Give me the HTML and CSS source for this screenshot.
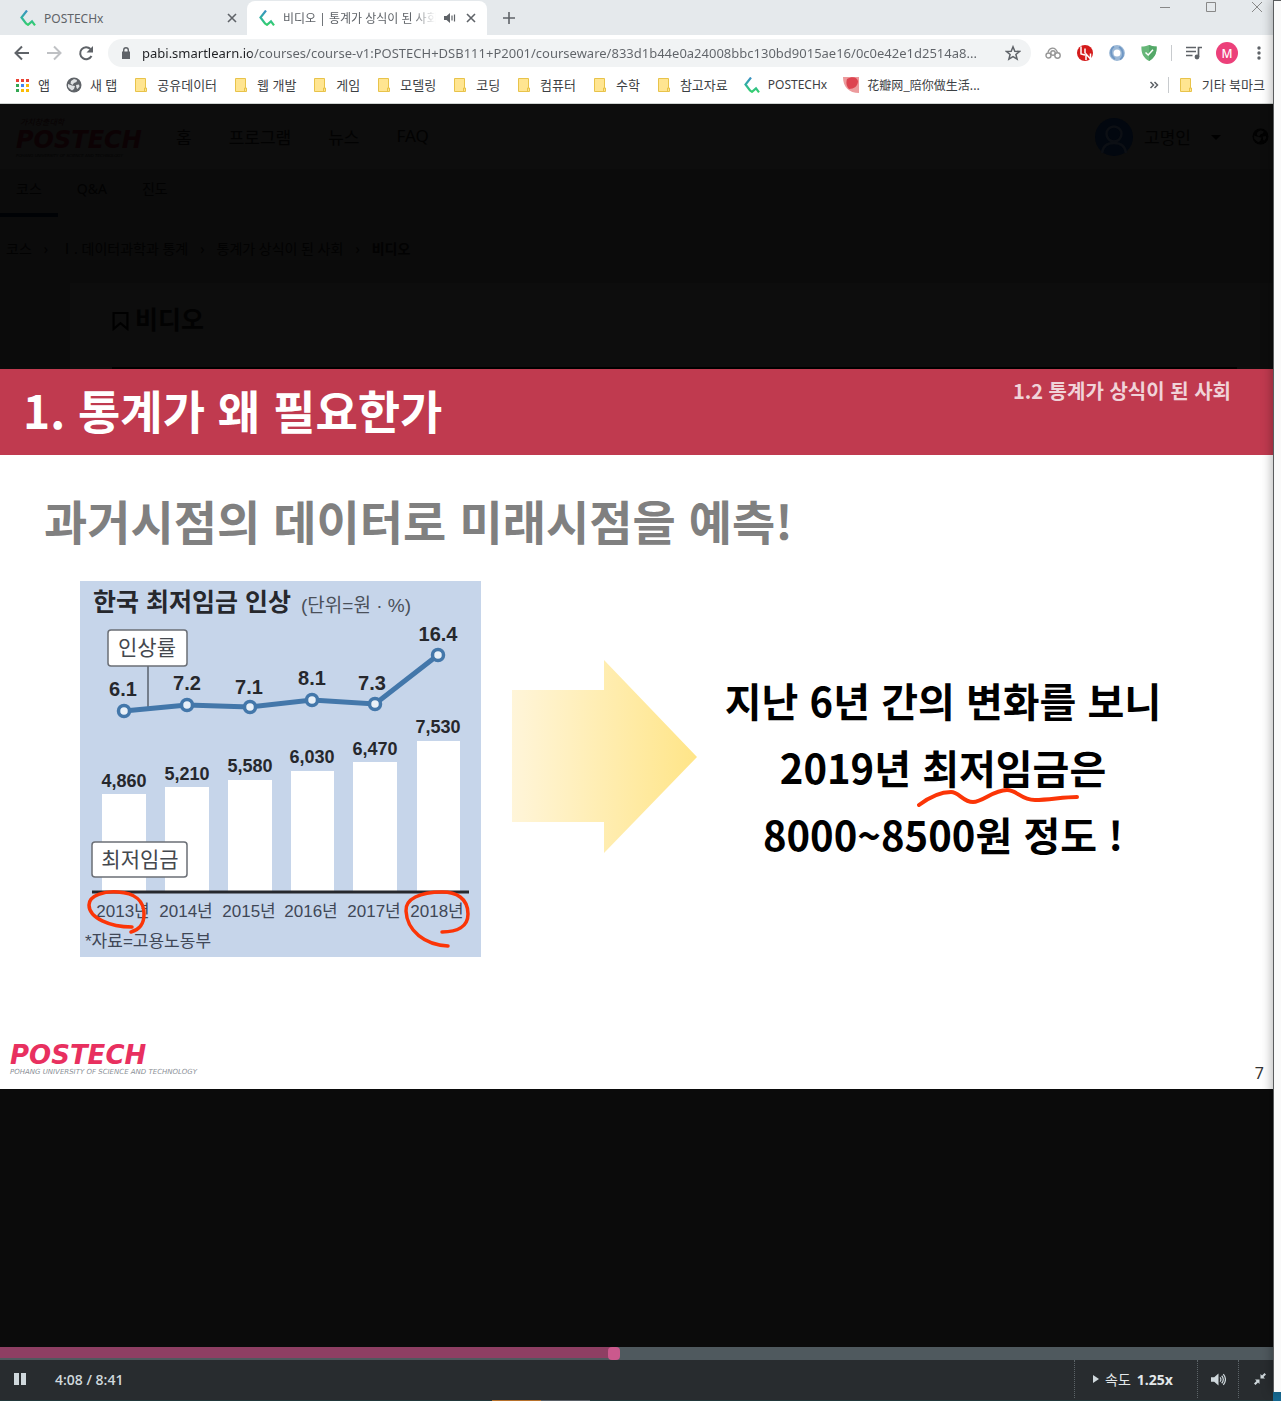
FILE: index.html
```html
<!DOCTYPE html>
<html lang="ko">
<head>
<meta charset="utf-8">
<meta name="viewport" content="width=device-width, initial-scale=1">
<title>비디오 | 통계가 상식이 된 사회</title>
<link rel="stylesheet" href="styles.css">
</head>
<body>
<svg class="defs" width="0" height="0" aria-hidden="true">
  <defs>
    <linearGradient id="brand" x1="0" y1="0" x2="0" y2="1"><stop offset="0" stop-color="#3b8fc4"/><stop offset=".5" stop-color="#2fb3a0"/><stop offset="1" stop-color="#35d06a"/></linearGradient>
    <symbol id="px" viewBox="0 0 16 16"><path d="M7 .5 1.500 7.500 6 13.500 8 14.800 12 11.300 15 15.300" fill="none" stroke="url(#brand)" stroke-width="2.200"/></symbol>
    <symbol id="close" viewBox="0 0 10 10"><path d="M1 1 9 9M9 1 1 9" stroke="#5f6368" stroke-width="1.600"/></symbol>
    <symbol id="folder" viewBox="0 0 16 16"><path d="M2.500 1.500h10v9.500h1v3.500h-11z" fill="#ffe591" stroke="#e8c34a"/><path d="M11.500 14v-3h1.500" fill="none" stroke="#e8c34a"/></symbol>
    <symbol id="globe" viewBox="0 0 16 16"><circle cx="8" cy="8" r="7.500" fill="currentColor"/><path class="land" d="M2 7 6 8.500 9 9 8 12 6 13.500 4 12 2 10zM8 2 11 3 10.500 5 8 6 6.500 8 4.500 6.500 5 4zM10 8 13 7.500 13.500 9.500 11.500 12 10.500 11z"/></symbol>
  </defs>
</svg>

<div class="window">
  <header class="chrome">
    <div class="tabstrip">
      <div class="tab">
        <svg class="ico16"><use href="#px"/></svg>
        <span class="tab-title">POSTECHx</span>
        <button class="plain" aria-label="닫기"><svg class="ico10"><use href="#close"/></svg></button>
      </div>
      <div class="tab active">
        <svg class="ico16"><use href="#px"/></svg>
        <span class="tab-title fade">비디오 | 통계가 상식이 된 사회</span>
        <svg class="ico12" viewBox="0 0 12 12"><path d="M0 4h2.500L6 1v10L2.500 8H0z" fill="#5f6368"/><path d="M8 3.500v5M10.500 2.500v7" stroke="#5f6368" stroke-width="1.200"/></svg>
        <button class="plain" aria-label="닫기"><svg class="ico10"><use href="#close"/></svg></button>
      </div>
      <button class="plain newtab" aria-label="새 탭"><svg class="ico12" viewBox="0 0 12 12"><path d="M6 0v12M0 6h12" stroke="#5f6368" stroke-width="1.600"/></svg></button>
      <div class="winbtns">
        <button class="plain" aria-label="최소화"><svg class="ico10" viewBox="0 0 10 10"><path d="M0 5.500h10" stroke="#888"/></svg></button>
        <button class="plain" aria-label="최대화"><svg class="ico10" viewBox="0 0 10 10"><path d="M.5.5h9v9h-9z" fill="none" stroke="#888"/></svg></button>
        <button class="plain" aria-label="창 닫기"><svg class="ico10" viewBox="0 0 10 10"><path d="M0 0 10 10M10 0 0 10" stroke="#888"/></svg></button>
      </div>
    </div>

    <div class="toolbar">
      <button class="plain" aria-label="뒤로"><svg class="ico16" viewBox="0 0 16 16"><path d="M15 8H2M8 1.500 1.500 8 8 14.500" fill="none" stroke="#5f6368" stroke-width="2"/></svg></button>
      <button class="plain" aria-label="앞으로"><svg class="ico16" viewBox="0 0 16 16"><path d="M1 8h13M8 1.500 14.500 8 8 14.500" fill="none" stroke="#bfc1c4" stroke-width="2"/></svg></button>
      <button class="plain" aria-label="새로고침"><svg class="ico16" viewBox="0 0 16 16"><path d="M13.500 11A6 6 0 1 1 12.500 4" fill="none" stroke="#5f6368" stroke-width="2"/><path d="M15 1v6.500H8.500z" fill="#5f6368"/></svg></button>
      <div class="omnibox">
        <svg class="ico12" viewBox="0 0 12 12"><path d="M2 4.500h8V12H2z" fill="#5f6368"/><path d="M3.700 5V3a2.300 2.300 0 0 1 4.600 0v2" fill="none" stroke="#5f6368" stroke-width="1.400"/></svg>
        <input class="url" type="text" aria-label="주소" value="pabi.smartlearn.io/courses/course-v1:POSTECH+DSB111+P2001/courseware/833d1b44e0a24008bbc130bd9015ae16/0c0e42e1d2514a8...">
        <button class="plain" aria-label="즐겨찾기"><svg class="ico16" viewBox="0 0 16 16"><path d="M8 1.800 9.800 6.200 14.500 6.500 10.900 9.500 12.100 14.100 8 11.600 3.900 14.100 5.100 9.500 1.500 6.500 6.200 6.200z" fill="none" stroke="#5f6368" stroke-width="1.500"/></svg></button>
      </div>
      <div class="extensions">
        <svg class="ico16" viewBox="0 0 16 16"><g fill="none" stroke="#969696" stroke-width="1.400"><circle cx="3.500" cy="10.500" r="2.500"/><circle cx="8" cy="8" r="2.200"/><circle cx="12.500" cy="10.500" r="2.700"/><path d="M3 7.500C4 2.500 10 1 12.500 7.500"/></g></svg>
        <svg class="ico16" viewBox="0 0 16 16"><circle cx="8" cy="8" r="8" fill="#d41b1b"/><path d="M4 1.500v7.500l4 1M8 3.500v5M9 15V9l4.500 5V8.500" fill="none" stroke="#fff" stroke-width="1.500"/></svg>
        <svg class="ico16" viewBox="0 0 16 16"><circle cx="8" cy="8" r="5.700" fill="none" stroke="#9bb8d6" stroke-width="4.400"/><path d="M5 1.500C1 4 1 11 6 14M11 14.500c4-2.500 4-9.500-1-12.500" fill="none" stroke="#6f97c4" stroke-width="1.800"/></svg>
        <svg class="ico16" viewBox="0 0 16 16"><path d="M8 0c3 1 5 1.500 7.600 1.500C15.800 8 14 12.500 8 16 2 12.500.2 8 .4 1.500 3 1.500 5 1 8 0z" fill="#67b779"/><path d="M8 0c3 1 5 1.500 7.600 1.500C15.800 8 14 12.500 8 16z" fill="#54a868"/><path d="M4.500 7.500 7.200 10 12 4.800" fill="none" stroke="#fff" stroke-width="1.500"/></svg>
        <span class="sep"></span>
        <svg class="ico16" viewBox="0 0 16 16"><path d="M0 2.500h10M0 6.500h10M0 10.500h6.500M12.500 12V2.500H16" fill="none" stroke="#5f6368" stroke-width="1.700"/><circle cx="11" cy="12" r="2.400" fill="#5f6368"/></svg>
        <button class="plain avatar">M</button>
        <svg class="menu" viewBox="0 0 4 14"><g fill="#5f6368"><circle cx="2" cy="2" r="1.700"/><circle cx="2" cy="7" r="1.700"/><circle cx="2" cy="12" r="1.700"/></g></svg>
      </div>
    </div>

    <nav class="bookmarks" aria-label="북마크">
      <a href="#"><svg class="ico16" viewBox="0 0 16 16"><path d="M2 2h3v3H2zM7 2h3v3H7zM12 2h3v3h-3z" fill="#ea4335"/><path d="M2 7h3v3H2zM2 12h3v3H2z" fill="#34a853"/><path d="M7 7h3v3H7z" fill="#4285f4"/><path d="M12 7h3v3h-3zM7 12h3v3H7zM12 12h3v3h-3z" fill="#fbbc05"/></svg>앱</a>
      <a href="#"><svg class="ico16 grey"><use href="#globe"/></svg>새 탭</a>
      <a href="#"><svg class="ico16"><use href="#folder"/></svg>공유데이터</a>
      <a href="#"><svg class="ico16"><use href="#folder"/></svg>웹 개발</a>
      <a href="#"><svg class="ico16"><use href="#folder"/></svg>게임</a>
      <a href="#"><svg class="ico16"><use href="#folder"/></svg>모델링</a>
      <a href="#"><svg class="ico16"><use href="#folder"/></svg>코딩</a>
      <a href="#"><svg class="ico16"><use href="#folder"/></svg>컴퓨터</a>
      <a href="#"><svg class="ico16"><use href="#folder"/></svg>수학</a>
      <a href="#"><svg class="ico16"><use href="#folder"/></svg>참고자료</a>
      <a href="#" lang="en"><svg class="ico16"><use href="#px"/></svg>POSTECHx</a>
      <a href="#" lang="zh"><svg class="ico16" viewBox="0 0 16 16"><path d="M0 0h16v16C6 16 0 10 0 0z" fill="#ec9a9c"/><path d="M4 2C9-1 14 0 15 4c0 5-4 8-9 8C3 9 3 5 4 2z" fill="#dd4450"/></svg>花瓣网_陪你做生活...</a>
      <div class="more">
        <button class="plain" aria-label="더보기"><svg class="ico10" viewBox="0 0 10 10"><path d="M1.500 2 4.500 5 1.500 8M5.500 2 8.500 5 5.500 8" fill="none" stroke="#5f6368" stroke-width="1.500"/></svg></button>
        <span class="sep"></span>
        <a href="#"><svg class="ico16"><use href="#folder"/></svg>기타 북마크</a>
      </div>
    </nav>
  </header>

  <main class="page">
    <div class="site-nav">
      <div class="brand dim"><span class="motto">가치창출대학</span><span class="word">POSTECH</span><span class="sub">POHANG UNIVERSITY OF SCIENCE AND TECHNOLOGY</span></div>
      <nav class="links"><a href="#">홈</a><a href="#">프로그램</a><a href="#">뉴스</a><a href="#">FAQ</a></nav>
      <div class="user">
        <svg class="face" viewBox="0 0 38 38"><circle cx="19" cy="19" r="19" fill="#02070f"/><g fill="none" stroke="#0c0f14" stroke-width="2.500"><circle cx="19" cy="16" r="7.500"/><path d="M7 35c1-8 6-10 12-10s11 2 12 10"/></g></svg>
        <span>고명인</span>
        <svg class="ico10" viewBox="0 0 10 10"><path d="M0 3h10L5 8z"/></svg>
        <svg class="globe"><use href="#globe"/></svg>
      </div>
    </div>
    <nav class="subtabs"><a class="on" href="#">코스</a><a href="#">Q&amp;A</a><a href="#">진도</a></nav>
    <nav class="crumbs" aria-label="위치"><a href="#">코스</a><i>›</i><a href="#">Ⅰ. 데이터과학과 통계</a><i>›</i><a href="#">통계가 상식이 된 사회</a><i>›</i><b>비디오</b></nav>
    <section class="card">
      <h1><svg class="flag" viewBox="0 0 16 18"><path d="M1.500 1.500h13V16.500L8 11 1.500 16.500z" fill="none" stroke="#000" stroke-width="2"/></svg>비디오</h1>
      <div class="rule"></div>
    </section>

    <article class="slide">
      <header class="slide-head">
        <h2>1. 통계가 왜 필요한가</h2>
        <p>1.2 통계가 상식이 된 사회</p>
      </header>
      <h3>과거시점의 데이터로 미래시점을 예측!</h3>
      <div class="slide-row">
        <svg class="chart" viewBox="0 0 401 376" role="img" aria-label="한국 최저임금 인상">
          <rect width="401" height="376" fill="#c6d5ea"/>
          <text class="c-title" x="13" y="30">한국 최저임금 인상</text>
          <text class="c-unit" x="221" y="31">(단위=원 · %)</text>
          <path d="M68 85v41" stroke="#59616c" stroke-width="1.500"/>
          <g fill="#fff"><path d="M22 213h44v98H22zM85 206h44v105H85zM148 199h44v112h-44zM211 190h43v121h-43zM273 181h44v130h-44zM337 160h43v151h-43z"/></g>
          <path d="M12 311h377" stroke="#26282d" stroke-width="3"/>
          <g fill="#fff" stroke="#6b6f76" stroke-width="1.500"><rect x="28" y="49" width="79" height="36" rx="3"/><rect x="12" y="261" width="95" height="35" rx="3"/></g>
          <g class="c-tag"><text x="67" y="74">인상률</text><text x="60" y="286">최저임금</text></g>
          <path d="M44 130 107 124 170 126 232 119 295 123 358 74" fill="none" stroke="#4377aa" stroke-width="5"/>
          <g fill="#e8f0f8" stroke="#4377aa" stroke-width="3.500"><circle cx="44" cy="130" r="5.500"/><circle cx="107" cy="124" r="5.500"/><circle cx="170" cy="126" r="5.500"/><circle cx="232" cy="119" r="5.500"/><circle cx="295" cy="123" r="5.500"/><circle cx="358" cy="74" r="5.500"/></g>
          <g class="c-rate"><text x="43" y="115">6.1</text><text x="107" y="109">7.2</text><text x="169" y="113">7.1</text><text x="232" y="104">8.1</text><text x="292" y="109">7.3</text><text x="358" y="60">16.4</text></g>
          <g class="c-wage"><text x="44" y="206">4,860</text><text x="107" y="199">5,210</text><text x="170" y="191">5,580</text><text x="232" y="182">6,030</text><text x="295" y="174">6,470</text><text x="358" y="152">7,530</text></g>
          <g class="c-year"><text x="43" y="336">2013년</text><text x="106" y="336">2014년</text><text x="169" y="336">2015년</text><text x="231" y="336">2016년</text><text x="294" y="336">2017년</text><text x="357" y="336">2018년</text></g>
          <text class="c-src" x="5" y="366">*자료=고용노동부</text>
          <g fill="none" stroke="#fb3507" stroke-width="3.500" stroke-linecap="round"><path d="M52 346C30 346 9 337 9 324 9 314 25 310 38 311 55 312 64 320 64 333 64 345 58 349 51 351"/><path d="M362 351C377 351 388 346 388 333 388 317 376 311 362 311 340 311 325 318 326 330 327 350 345 364 368 365"/></g>
        </svg>
        <svg class="arrow" viewBox="0 0 185 193" aria-hidden="true"><defs><linearGradient id="gold"><stop offset="0" stop-color="#fff5d9"/><stop offset="1" stop-color="#ffe588"/></linearGradient></defs><path d="M0 30h92V0l93 97-93 96v-31H0z" fill="url(#gold)"/></svg>
        <p class="message">지난 6년 간의 변화를 보니<br>2019년 <span class="marked">최저임금<svg class="wave" viewBox="0 0 162 20"><path d="M2 17C14 8 26 4 34 4c8 0 12 10 22 10S76 2 90 2c10 0 14 10 28 10 14 0 28-3 42-3" fill="none" stroke="#fb3507" stroke-width="4" stroke-linecap="round"/></svg></span>은<br>8000~8500원 정도 !</p>
      </div>
      <footer class="slide-foot">
        <div class="brand"><span class="word">POSTECH</span><span class="sub">POHANG UNIVERSITY OF SCIENCE AND TECHNOLOGY</span></div>
        <span class="num">7</span>
      </footer>
    </article>
  </main>

  <div class="player">
    <input class="seek" type="range" min="0" max="521" value="251" aria-label="재생 위치">
    <div class="controls">
      <button class="plain pause" aria-label="일시정지"><svg class="ico12" viewBox="0 0 12 12"><path d="M0 0h5v12H0zM7 0h5v12H7z" fill="#cfd8dc"/></svg></button>
      <span class="time">4:08 / 8:41</span>
      <button class="plain ctl speed"><svg viewBox="0 0 6 8"><path d="M0 0 6 4 0 8z" fill="#cfd8dc"/></svg><span>속도</span><b>1.25x</b></button>
      <button class="plain ctl vol" aria-label="음량"><svg viewBox="0 0 14 12"><path d="M0 4h3L7 .5v11L3 8H0z" fill="#cfd8dc"/><path d="M8.500 4q1.500 2 0 4M10 2.500q3 3.500 0 7M11.500 1q4 5 0 10" fill="none" stroke="#cfd8dc" stroke-width="1.100"/></svg></button>
      <button class="plain ctl shrink" aria-label="전체화면 종료"><svg class="ico12" viewBox="0 0 12 12"><path d="M6.500 1 8 2.500 10.500 0 12 1.500 9.500 4 11 5.500H6.500zM5.500 11 4 9.500 1.500 12 0 10.500 2.500 8 1 6.500h4.500z" fill="#cfd8dc"/></svg></button>
    </div>
  </div>
  <div class="taskbar"><span class="orange"></span><span class="slate"></span></div>
</div>
<aside class="neighbor"></aside>
</body>
</html>
```
FILE: styles.css
```css
* { box-sizing: border-box; }
body {
  margin: 0;
  display: flex;
  min-height: 100vh;
  background: #176a92;
  font-family: "Noto Sans", "Noto Sans CJK KR", sans-serif;
  font-size: 13px;
  color: #3c4043;
}
a { color: inherit; text-decoration: none; }
h1, h2, h3, p { margin: 0; }
.defs { position: absolute; }
.plain { border: 0; padding: 0; background: none; font: inherit; color: inherit; display: flex; align-items: center; }
.ico10 { width: 10px; height: 10px; flex: none; }
.ico12 { width: 12px; height: 12px; flex: none; }
.ico16 { width: 16px; height: 16px; flex: none; }

.window { flex: 1; min-width: 0; display: flex; flex-direction: column; }
.neighbor {
  width: 8px;
  margin-bottom: 9px;
  background: #fafafa;
  border-left: 1px solid #5a5c5e;
  border-top: 1px solid #5a5c5e;
  box-shadow: 0 0 12px rgba(0, 0, 0, .4);
}

/* browser frame */
.chrome { background: #fff; border-bottom: 1px solid #d0d4d2; }
.tabstrip { display: flex; height: 35px; background: #e5e9ec; }
.tab { display: flex; align-items: center; width: 240px; padding: 0 11px 0 12px; gap: 8px; margin-top: 1px; color: #5f6368; font-size: 12px; }
.tab:first-child { width: 247px; padding: 0 10px 0 20px; }
.tab.active { background: #fff; border-radius: 8px 8px 0 0; }
.tab .ico12 { margin-right: 2px; }
.tab-title { flex: 1; min-width: 0; white-space: nowrap; overflow: hidden; }
.fade { -webkit-mask-image: linear-gradient(to right, #000 84%, transparent); mask-image: linear-gradient(to right, #000 84%, transparent); }
.newtab { margin-left: 16px; }
.winbtns { margin-left: auto; display: flex; align-items: flex-start; gap: 36px; padding: 2px 11px 0 0; }

.toolbar { display: flex; align-items: center; gap: 14px; height: 36px; padding: 0 12px 0 14px; }
.toolbar > .plain { margin-right: 2px; }
.omnibox { flex: 1; min-width: 0; display: flex; align-items: center; gap: 10px; height: 28px; margin-left: -2px; padding: 0 10px 0 12px; border-radius: 14px; background: #f1f3f4; }
.url {
  flex: 1;
  min-width: 0;
  border: 0;
  padding: 0;
  font-family: "Noto Sans", sans-serif;
  font-size: 13px;
  background: linear-gradient(to right, #202124 110px, #5f6368 110px);
  -webkit-background-clip: text;
  background-clip: text;
  -webkit-text-fill-color: transparent;
}
.extensions { display: flex; align-items: center; gap: 16px; }
.extensions .sep { margin: 0 -2px; }
.sep { width: 1px; height: 16px; background: #c8cbce; }
.avatar { justify-content: center; width: 22px; height: 22px; border-radius: 50%; background: #ec407a; color: #fff; font-size: 12px; font-weight: 500; margin: 0 3px 0 -2px; }
.menu { width: 4px; height: 14px; }

.bookmarks { display: flex; align-items: center; gap: 16px; height: 32px; padding: 0 8px 5px 14px; white-space: nowrap; line-height: 20px; }
.bookmarks a { display: flex; align-items: center; gap: 8px; font-size: 13px; }
.bookmarks a[lang] { font-size: 12px; }
.bookmarks a[lang="zh"] { font-family: "Noto Sans CJK SC", sans-serif; }
.more { margin-left: auto; display: flex; align-items: center; gap: 9px; }
.grey { color: #5f6368; }
.land { fill: var(--land, #dfe1e3); }

/* dimmed course page behind the video */
.page { flex: 1; background: #0b0b0b; color: #020202; }
.site-nav { --land: #0d0d0d; display: flex; align-items: center; height: 65px; padding: 0 4px 0 16px; background: #0d0d0d; font-size: 17px; }
.links { display: flex; gap: 37px; margin-left: 32px; }
.user { display: flex; align-items: center; gap: 11px; margin-left: auto; }
.user .ico10 { margin: 0 20px 0 9px; }
.face { width: 38px; height: 38px; }
.globe { width: 17px; height: 17px; }
.subtabs { display: flex; gap: 3px; font-size: 14px; line-height: 40px; }
.subtabs a { padding: 0 16px 4px; border-bottom: 4px solid transparent; }
.subtabs .on { border-color: #000205; }
.crumbs { display: flex; gap: 12px; height: 66px; align-items: center; padding: 0 6px 4px; font-size: 14px; }
.crumbs i { font-style: normal; }
.card { margin-left: 70px; padding: 18px 36px 0 42px; background: #0d0d0d; }
.card h1 { display: flex; gap: 6px; font-size: 25px; line-height: 36px; height: 66px; align-items: flex-start; }
.flag { width: 17px; height: 20px; margin-top: 10px; }
.rule { height: 2px; background: #000; }

/* wordmark */
.brand { display: flex; flex-direction: column; color: #e8305f; font-family: "DejaVu Sans", sans-serif; font-style: italic; font-weight: 400; white-space: nowrap; }
.word { font-size: 26px; line-height: 26px; font-weight: 700; }
.sub { font-size: 7px; line-height: 9px; color: #8a8f96; }
.brand.dim { width: 128px; padding-top: 2px; }
.motto { font-size: 8px; line-height: 10px; font-family: "Noto Sans CJK KR", sans-serif; padding-left: 4px; color: #080203; }
.dim .word { font-size: 24px; color: #0c0204; }
.dim .sub { font-size: 4px; line-height: 6px; color: #040404; }

/* slide */
.slide { display: flex; flex-direction: column; background: #fff; color: #000; font-family: "Noto Sans CJK KR", sans-serif; font-weight: 700; }
.slide-head { display: flex; justify-content: space-between; height: 86px; padding: 8px 42px 0 23px; background: #c03a4f; color: #fff; }
.slide-head h2 { font-size: 46px; line-height: 64px; }
.slide-head p { font-size: 20px; line-height: 28px; color: #f0d3d8; }
.slide h3 { padding: 32px 44px 0; font-size: 47px; line-height: 66px; color: #808080; }
.slide-row { display: flex; align-items: flex-start; padding: 28px 84px 0 80px; }
.chart { width: 401px; height: 376px; flex: none; }
.arrow { width: 185px; height: 193px; flex: none; margin: 79px 0 0 31px; }
.message { flex: 1; margin-top: 86px; text-align: center; font-size: 40px; line-height: 67px; white-space: nowrap; }
.marked { position: relative; }
.wave { position: absolute; left: -5px; bottom: -12px; width: 162px; height: 20px; }
.slide-foot { display: flex; justify-content: space-between; align-items: flex-end; height: 132px; padding: 0 9px 6px 10px; }
.slide-foot .brand { margin-bottom: 6px; }
.num { font: 16px/20px "Noto Sans", sans-serif; color: #333; }

.chart text { font-family: "Liberation Sans", "Noto Sans CJK KR", sans-serif; fill: #26282d; font-weight: 400; }
.chart .c-title { font-size: 25px; font-weight: 700; }
.chart .c-unit { font-size: 19px; fill: #4a505a; }
.chart .c-tag text { font-size: 21px; text-anchor: middle; fill: #44484e; }
.chart .c-rate text { font-size: 20px; font-weight: 700; text-anchor: middle; }
.chart .c-wage text { font-size: 18px; font-weight: 700; text-anchor: middle; }
.chart .c-year text { font-size: 17px; text-anchor: middle; fill: #3f4756; }
.chart .c-src { font-size: 17px; fill: #3f4756; }

/* player */
.player { background: #282c2f; color: #e3e8ea; font-family: "Open Sans", "Noto Sans CJK KR", sans-serif; font-size: 14px; }
.seek {
  -webkit-appearance: none;
  appearance: none;
  display: block;
  width: 100%;
  height: 13px;
  margin: 0;
  background: linear-gradient(to right, #8e3f63 48%, transparent 48%) 0 0 / 100% 11px no-repeat #4f595e;
}
.seek::-webkit-slider-thumb { -webkit-appearance: none; width: 12px; height: 13px; border-radius: 4px; background: #cb598d; }
.controls { display: flex; align-items: center; height: 40px; padding: 0 0 2px 14px; }
.time { margin-left: 29px; font-weight: 600; color: #cfd8dc; }
.ctl { align-self: stretch; border-left: 1px dotted #5c6468; }
.speed { margin-left: auto; width: 123px; padding-left: 18px; gap: 6px; }
.speed svg { width: 6px; height: 8px; }
.speed b { font-weight: 700; }
.vol { width: 41px; padding-left: 13px; }
.vol svg { width: 15px; height: 13px; }
.shrink { width: 35px; padding-left: 15px; }
.taskbar { display: flex; height: 1px; background: #22383a; padding-left: 492px; }
.orange { width: 49px; background: #b8722c; }
.slate { width: 49px; background: #596066; }
```
